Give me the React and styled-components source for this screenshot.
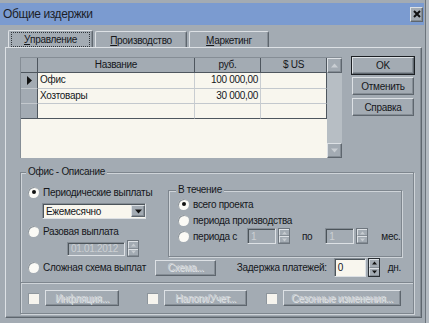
import React from "react";
import styled, { createGlobalStyle } from "styled-components";

const BG = "#a3abb3";
const LIGHT = "#dde1e5";
const SHADOW = "#5e666e";
const MID = "#858d95";
const CREAM = "#f8f6ee";
const DIS = "#ccd0d4";
const INK = "#15171b";

const GlobalStyle = createGlobalStyle`
  html, body { margin: 0; padding: 0; background: ${BG}; }
  body {
    font-family: "Liberation Sans", Arial, sans-serif;
    font-size: 10px;
    letter-spacing: -0.3px;
    color: ${INK};
  }
  * { box-sizing: border-box; }
`;

const raised = `
  border-top: 1px solid ${LIGHT};
  border-left: 1px solid ${LIGHT};
  border-right: 1px solid ${SHADOW};
  border-bottom: 1px solid ${SHADOW};
  box-shadow: inset -1px -1px 0 ${MID};
`;

const sunken = `
  border-top: 1px solid ${MID};
  border-left: 1px solid ${MID};
  border-right: 1px solid ${LIGHT};
  border-bottom: 1px solid ${LIGHT};
  box-shadow: inset 1px 1px 0 #4c545a;
`;

const Window = styled.div`
  width: 429px;
  height: 323px;
  background: ${BG};
  display: flex;
  flex-direction: column;
  padding-top: 3px;
  box-shadow: inset -3px 0 0 #b3bac1, inset -4px 0 0 #6c747c;
  overflow: hidden;
`;

const TitleBar = styled.div`
  height: 22px;
  margin-right: 5px;
  background: #7b9bd0;
  display: flex;
  align-items: center;
  justify-content: space-between;
  padding: 0 1px 0 3px;
`;

const Title = styled.span`
  font-size: 12px;
  letter-spacing: -0.4px;
  color: #1b1e28;
`;

const CloseButton = styled.div`
  width: 13px;
  height: 15px;
  background: ${BG};
  ${raised}
  display: flex;
  align-items: center;
  justify-content: center;
`;

const TabStrip = styled.div`
  display: flex;
  align-items: flex-end;
  height: 17px;
  margin-top: 5px;
  padding-left: 8px;
`;

const Tab = styled.div`
  width: ${(p) => p.$w}px;
  height: ${(p) => (p.$active ? 17 : 16)}px;
  margin-right: 2px;
  border-top: 1px solid ${LIGHT};
  border-left: 1px solid ${LIGHT};
  border-right: 1px solid ${SHADOW};
  box-shadow: inset -1px 0 0 ${MID};
  border-radius: 2px 2px 0 0;
  padding: 1px 2px 0;
  display: flex;
  align-items: center;
  justify-content: center;
  & > span {
    width: 100%;
    height: 100%;
    display: flex;
    align-items: center;
    justify-content: center;
    border: 1px dotted ${(p) => (p.$active ? "#30363c" : "transparent")};
  }
  u { text-decoration: underline; }
`;

const Panel = styled.div`
  flex: 1;
  min-height: 0;
  margin: 0 7px 5px 5px;
  border-top: 1px solid ${LIGHT};
  border-left: 1px solid ${LIGHT};
  border-right: 1px solid ${SHADOW};
  border-bottom: 1px solid ${SHADOW};
  box-shadow: inset -1px -1px 0 ${MID};
  padding: 9px 7px 0 14px;
  display: flex;
  flex-direction: column;
`;

const TopRow = styled.div`
  display: flex;
  gap: 10px;
  height: 101px;
  flex: none;
`;

const GridBox = styled.div`
  width: 322px;
  display: flex;
  border-top: 1px solid ${MID};
  border-left: 1px solid ${MID};
`;

const Table = styled.div`
  flex: 1;
  background: ${CREAM};
  display: grid;
  grid-template-columns: 17px 157px 66px 66px;
  grid-template-rows: 15px 16px 15px 15px;
  align-content: start;
`;

const HeadCell = styled.div`
  background: ${BG};
  border-right: 1px solid #4e565e;
  border-bottom: 1px solid #4e565e;
  text-align: center;
  line-height: 14px;
`;

const Marker = styled.div`
  background: ${BG};
  border-right: 1px solid #4e565e;
  border-bottom: 1px solid ${(p) => (p.$last ? "#4e565e" : "#c3c8cd")};
  display: flex;
  align-items: center;
  justify-content: center;
`;

const Cell = styled.div`
  border-right: 1px solid ${(p) => (p.$end ? "#4e565e" : "#c9cdd1")};
  border-bottom: 1px solid ${(p) => (p.$last ? "#4e565e" : "#c3c8cd")};
  padding: 0 2px;
  text-align: ${(p) => (p.$num ? "right" : "left")};
  line-height: 14px;
  white-space: nowrap;
`;

const ScrollBar = styled.div`
  width: 15px;
  background: #b7bec4;
  display: flex;
  flex-direction: column;
  justify-content: space-between;
`;

const ScrollBtn = styled.div`
  height: 15px;
  background: ${BG};
  ${raised}
  display: flex;
  align-items: center;
  justify-content: center;
`;

const ButtonCol = styled.div`
  width: 62px;
  display: flex;
  flex-direction: column;
  gap: 3px;
`;

const Button = styled.div`
  height: ${(p) => p.$h || 18}px;
  width: ${(p) => (p.$w ? `${p.$w}px` : "auto")};
  margin-left: ${(p) => p.$ml || 0}px;
  background: ${BG};
  ${raised}
  ${(p) => p.$default && `outline: 1px solid #1c2024;`}
  display: flex;
  align-items: center;
  justify-content: center;
  color: ${(p) => (p.$disabled ? DIS : INK)};
  text-shadow: ${(p) => (p.$disabled ? "1px 1px 0 #e4e7ea" : "none")};
  white-space: nowrap;
  flex: none;
`;

const GroupBox = styled.fieldset`
  margin: 8px 0 0;
  padding: 0 12px 7px 7px;
  width: 394px;
  border: 1px solid #7e868e;
  box-shadow: inset 1px 1px 0 #cfd4d9, 1px 1px 0 #cfd4d9;
  min-width: 0;
`;

const Legend = styled.legend`
  padding: 0 2px;
  margin-left: -2px;
  background: ${BG};
  line-height: 12px;
`;

const UpperGrid = styled.div`
  display: grid;
  grid-template-columns: 140px 234px;
  margin-top: 6px;
`;

const Column = styled.div`
  display: flex;
  flex-direction: column;
`;

const RadioRow = styled.div`
  height: 16px;
  display: flex;
  align-items: center;
  gap: 4px;
  margin-top: ${(p) => p.$mt || 0}px;
  white-space: nowrap;
`;

const RadioDot = styled.span`
  width: 11px;
  height: 11px;
  border-radius: 50%;
  background: #fbfaf6;
  box-shadow: inset 1px 1px 0 #8d959c;
  display: flex;
  align-items: center;
  justify-content: center;
  flex: none;
  &::after {
    content: "";
    width: 4px;
    height: 4px;
    border-radius: 50%;
    background: #111;
    display: ${(p) => (p.$on ? "block" : "none")};
  }
`;

const Select = styled.div`
  width: 104px;
  height: 16px;
  margin: 3px 0 0 14px;
  background: ${CREAM};
  ${sunken}
  display: flex;
  align-items: center;
  justify-content: space-between;
  padding-left: 3px;
`;

const DropBtn = styled.div`
  width: 14px;
  height: 12px;
  background: ${BG};
  ${raised}
  display: flex;
  align-items: center;
  justify-content: center;
`;

const SpinGroup = styled.div`
  display: flex;
  align-items: center;
  gap: 2px;
  margin: ${(p) => p.$m || "0"};
`;

const Field = styled.div`
  width: ${(p) => p.$w}px;
  height: ${(p) => p.$h || 16}px;
  background: ${(p) => (p.$disabled ? BG : CREAM)};
  color: ${(p) => (p.$disabled ? DIS : INK)};
  ${sunken}
  display: flex;
  align-items: center;
  padding-left: 3px;
`;

const Spinner = styled.div`
  width: 12px;
  height: ${(p) => p.$h || 17}px;
  display: flex;
  flex-direction: column;
  border: 1px solid ${(p) => (p.$active ? "#2a2f34" : "#6e767e")};
  & > div {
    flex: 1;
    background: ${BG};
    border-top: 1px solid ${LIGHT};
    border-left: 1px solid ${LIGHT};
    border-bottom: 1px solid ${MID};
    display: flex;
    align-items: center;
    justify-content: center;
  }
`;

const InnerBox = styled.fieldset`
  margin: 0;
  padding: 0 0 4px 9px;
  border: 1px solid #7e868e;
  box-shadow: inset 1px 1px 0 #cfd4d9, 1px 1px 0 #cfd4d9;
  min-width: 0;
`;

const Label = styled.span`
  margin: ${(p) => p.$m || "0"};
  white-space: nowrap;
`;

const SchemeRow = styled.div`
  display: flex;
  align-items: center;
  height: 19px;
  margin-top: 1px;
`;

const Spacer = styled.div`
  flex: 1;
`;

const Separator = styled.div`
  height: 2px;
  margin: 5px -12px 0 -7px;
  border-top: 1px solid #7e868e;
  border-bottom: 1px solid #cfd4d9;
`;

const OptionGrid = styled.div`
  display: grid;
  grid-template-columns: 119px 119px 1fr;
  margin-top: 6px;
`;

const Option = styled.div`
  display: flex;
  align-items: center;
  gap: 6px;
`;

const CheckBox = styled.span`
  width: 11px;
  height: 11px;
  background: #f6f4ee;
  box-shadow: inset 1px 1px 0 #8d959c;
  flex: none;
`;

const Arrow = ({ dir = "down", color = "#111", size = 7 }) => (
  <svg width={size} height={Math.ceil(size / 2) + 1} viewBox="0 0 7 4">
    {dir === "down" ? (
      <polygon points="0,0 7,0 3.5,4" fill={color} />
    ) : (
      <polygon points="0,4 7,4 3.5,0" fill={color} />
    )}
  </svg>
);

const Spin = ({ active, h }) => (
  <Spinner $active={active} $h={h}>
    <div>
      <Arrow dir="up" size={5} color={active ? "#111" : "#c6cbd0"} />
    </div>
    <div>
      <Arrow dir="down" size={5} color={active ? "#111" : "#c6cbd0"} />
    </div>
  </Spinner>
);

const Radio = ({ on, children, mt }) => (
  <RadioRow $mt={mt}>
    <RadioDot $on={on} />
    {children}
  </RadioRow>
);

const rows = [
  { name: "Офис", rub: "100 000,00", cur: true },
  { name: "Хозтовары", rub: "30 000,00" },
  { name: "", rub: "" },
];

export default function App() {
  return (
    <>
      <GlobalStyle />
      <Window>
        <TitleBar>
          <Title>Общие издержки</Title>
          <CloseButton>
            <svg width="8" height="8" viewBox="0 0 8 8">
              <path d="M1 1 L7 7 M7 1 L1 7" stroke="#111" strokeWidth="2" />
            </svg>
          </CloseButton>
        </TitleBar>

        <TabStrip>
          <Tab $w={85} $active>
            <span>
              <u>У</u>правление
            </span>
          </Tab>
          <Tab $w={92}>
            <span>
              <u>П</u>роизводство
            </span>
          </Tab>
          <Tab $w={80}>
            <span>
              <u>М</u>аркетинг
            </span>
          </Tab>
        </TabStrip>

        <Panel>
          <TopRow>
            <GridBox>
              <Table>
                <HeadCell />
                <HeadCell>Название</HeadCell>
                <HeadCell>руб.</HeadCell>
                <HeadCell>$ US</HeadCell>
                {rows.map((r, i) => {
                  const last = i === rows.length - 1;
                  return (
                    <React.Fragment key={i}>
                      <Marker $last={last}>
                        {r.cur && (
                          <svg width="5" height="9" viewBox="0 0 5 9">
                            <polygon points="0,0 5,4.5 0,9" fill="#111" />
                          </svg>
                        )}
                      </Marker>
                      <Cell $last={last}>{r.name}</Cell>
                      <Cell $last={last} $num>
                        {r.rub}
                      </Cell>
                      <Cell $last={last} $end />
                    </React.Fragment>
                  );
                })}
              </Table>
              <ScrollBar>
                <ScrollBtn>
                  <Arrow dir="up" size={7} color="#c9ced3" />
                </ScrollBtn>
                <ScrollBtn>
                  <Arrow dir="down" size={7} color="#c9ced3" />
                </ScrollBtn>
              </ScrollBar>
            </GridBox>
            <ButtonCol>
              <Button $default $h={17}>
                OK
              </Button>
              <Button>Отменить</Button>
              <Button>Справка</Button>
            </ButtonCol>
          </TopRow>

          <GroupBox>
            <Legend>Офис - Описание</Legend>
            <UpperGrid>
              <Column>
                <Radio on>Периодические выплаты</Radio>
                <Select>
                  <span>Ежемесячно</span>
                  <DropBtn>
                    <Arrow size={7} />
                  </DropBtn>
                </Select>
                <Radio mt={4}>Разовая выплата</Radio>
                <SpinGroup $m="1px 0 0 39px">
                  <Field $w={58} $h={14} $disabled>
                    01.01.2012
                  </Field>
                  <Spin h={17} />
                </SpinGroup>
              </Column>
              <InnerBox>
                <Legend>В течение</Legend>
                <Radio on>всего проекта</Radio>
                <Radio>периода производства</Radio>
                <RadioRow>
                  <RadioDot />
                  <Label>периода с</Label>
                  <SpinGroup $m="0 0 0 6px">
                    <Field $w={29} $disabled>
                      1
                    </Field>
                    <Spin h={16} />
                  </SpinGroup>
                  <Label $m="0 0 0 8px">по</Label>
                  <SpinGroup $m="0 0 0 9px">
                    <Field $w={29} $disabled>
                      1
                    </Field>
                    <Spin h={16} />
                  </SpinGroup>
                  <Label $m="0 0 0 9px">мес.</Label>
                </RadioRow>
              </InnerBox>
            </UpperGrid>

            <SchemeRow>
              <Radio>Сложная схема выплат</Radio>
              <Button $w={61} $h={16} $ml={9} $disabled>
                Схема...
              </Button>
              <Spacer />
              <Label>Задержка платежей:</Label>
              <SpinGroup $m="0 0 0 7px">
                <Field $w={32} $h={19}>
                  0
                </Field>
                <Spin active h={19} />
              </SpinGroup>
              <Label $m="0 0 0 8px">дн.</Label>
            </SchemeRow>

            <Separator />

            <OptionGrid>
              <Option>
                <CheckBox />
                <Button $w={74} $h={16} $disabled>
                  Инфляция...
                </Button>
              </Option>
              <Option>
                <CheckBox />
                <Button $w={83} $h={16} $disabled>
                  Налоги/Учет...
                </Button>
              </Option>
              <Option>
                <CheckBox />
                <Button $w={118} $h={16} $disabled>
                  Сезонные изменения...
                </Button>
              </Option>
            </OptionGrid>
          </GroupBox>
        </Panel>
      </Window>
    </>
  );
}
